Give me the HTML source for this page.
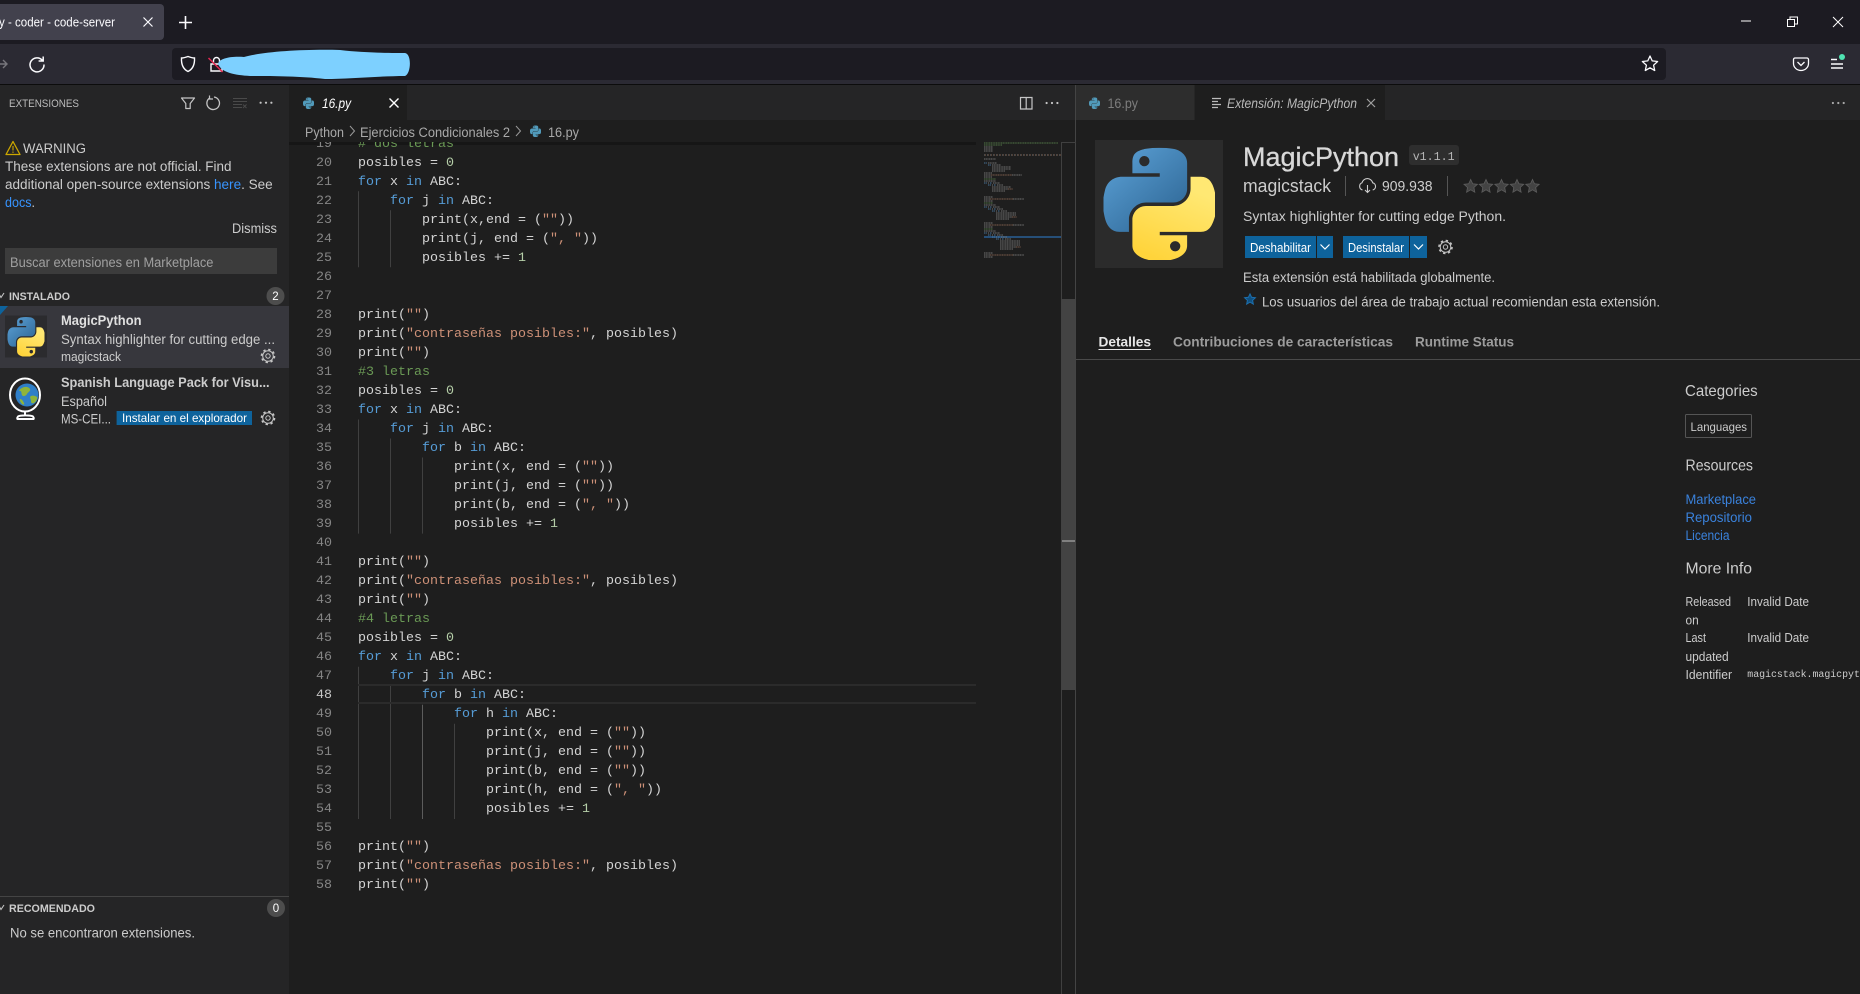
<!DOCTYPE html>
<html lang="es">
<head>
<meta charset="utf-8">
<title>coder - code-server</title>
<style>
html,body{margin:0;padding:0;width:1860px;height:994px;overflow:hidden;background:#1e1e1e}
svg.ui{position:absolute;left:0;top:0}
svg text{font-family:"Liberation Sans",sans-serif;font-size:13.4px;fill:#cccccc}
svg text.m{font-family:"Liberation Mono",monospace}
svg text.b{font-weight:700}
svg text.i{font-style:italic}
.code{position:absolute;left:289px;top:142px;width:687px;height:852px;overflow:hidden}
.code pre{position:absolute;margin:0;top:-7.3px;font:13.33px/19.02px "Liberation Mono",monospace;color:#d4d4d4}
pre.nums{left:0;width:43px;text-align:right;color:#858585}
pre.nums b{font-weight:400;color:#c6c6c6}
pre.src{left:69px}
.k{color:#569cd6}.s{color:#ce9178}.n{color:#b5cea8}.c{color:#6a9955}
</style>
</head>
<body>
<svg class="ui" width="1860" height="994" viewBox="0 0 1860 994">
<defs>
<linearGradient id="gb" x1="0.1" y1="0.05" x2="0.85" y2="0.9"><stop offset="0" stop-color="#5a9fd4"/><stop offset="1" stop-color="#306998"/></linearGradient>
<linearGradient id="gy" x1="0.7" y1="0.15" x2="0.35" y2="1"><stop offset="0" stop-color="#ffe873"/><stop offset="1" stop-color="#ffd43b"/></linearGradient>
<path id="pyb" fill-rule="evenodd" d="M54.9 0C50.3 0 45.9.4 42 1.1 30.6 3.1 28.5 7.4 28.5 15.2V25.5H55.5V29H18.3C10.4 29 3.5 33.7 1.4 42.7-1.1 53-1.2 59.4 1.4 70.2 3.3 78.2 7.9 83.9 15.8 83.9H25.1V71.5C25.1 62.6 32.8 54.7 42 54.7H69C76.5 54.7 82.5 48.5 82.5 41V15.2C82.5 7.9 76.3 2.4 69 1.2 64.4.4 59.6 0 54.9 0ZM40.3 8.3a5.1 5.1 0 1 1 0 10.2 5.1 5.1 0 0 1 0-10.2Z"/>
<path id="pyy" fill-rule="evenodd" d="M85.9 29V41C85.9 50.3 78 58.1 69 58.1H42C34.6 58.1 28.5 64.4 28.5 71.9V97.6C28.5 104.9 34.9 109.2 42 111.3 50.5 113.8 58.7 114.2 69 111.3 75.7 109.3 82.5 105.5 82.5 97.6V87.3H55.5V83.9H96C103.9 83.9 106.8 78.4 109.5 70.2 112.3 61.8 112.2 53.7 109.5 42.7 107.6 34.9 103.9 29 96 29ZM70.7 93.2a5.1 5.1 0 1 1 0 10.2 5.1 5.1 0 0 1 0-10.2Z"/>
<symbol id="pyc" viewBox="0 0 110 112" preserveAspectRatio="none"><use href="#pyb" fill="url(#gb)"/><use href="#pyy" fill="url(#gy)"/></symbol>
<symbol id="pym" viewBox="0 0 110 112" preserveAspectRatio="none"><use href="#pyb" fill="#519aba"/><use href="#pyy" fill="#519aba"/></symbol>
<g id="gear" fill="none" stroke="#c5c5c5"><circle r="5.3" stroke-width="1"/><circle r="2.2" stroke-width="1"/><circle r="6.5" stroke-width="1.6" stroke-dasharray="2.4 2.7"/></g>
<polygon id="star" points="0,-7 2,-2.7 6.7,-2.2 3.2,1 4.1,5.7 0,3.3 -4.1,5.7 -3.2,1 -6.7,-2.2 -2,-2.7"/>
<polygon id="stars" points="0,-5.6 1.6,-2.2 5.4,-1.8 2.6,.8 3.3,4.6 0,2.6 -3.3,4.6 -2.6,.8 -5.4,-1.8 -1.6,-2.2"/>
<g id="dots"><circle cx="-5.4" r="1.1"/><circle r="1.1"/><circle cx="5.4" r="1.1"/></g>
</defs>

<!-- browser chrome -->
<rect width="1860" height="44" fill="#1c1b22"/>
<rect x="-6" y="4" width="170" height="36" rx="4" fill="#42414d"/>
<text x="-1" y="26.5" textLength="116" lengthAdjust="spacingAndGlyphs" style="font-size:13px;fill:#fbfbfe">y - coder - code-server</text>
<path d="M143.5 17.5l9 9M152.5 17.5l-9 9" stroke="#fbfbfe" stroke-width="1.2"/>
<path d="M185.5 16v13M179 22.5h13" stroke="#fbfbfe" stroke-width="1.6"/>
<path d="M1741 21h10" stroke="#fff" stroke-width="1"/>
<path d="M1787.5 19.5h7v7h-7zM1790 19.5v-2.5h7.5v7h-3" fill="none" stroke="#fff" stroke-width="1"/>
<path d="M1833 17l10 10M1843 17l-10 10" stroke="#fff" stroke-width="1"/>

<rect y="44" width="1860" height="40" fill="#2b2a33"/>
<rect y="84" width="1860" height="1" fill="#0c0c0c"/>
<rect x="172" y="48" width="1494" height="32" rx="4" fill="#1c1b22"/>
<path d="M-2 64H7M3 60l4 4-4 4" fill="none" stroke="#77767c" stroke-width="1.4"/>
<path d="M42.5 60.5A7 7 0 1 0 44 64.5M43.2 56.5V61h-4.6" fill="none" stroke="#fbfbfe" stroke-width="1.5"/>
<path d="M188 56.5C191 57.6 193 58 194.5 58 194.8 64 193 69 188 71.5 183 69 181.2 64 181.5 58 183 58 185 57.6 188 56.5Z" fill="none" stroke="#fbfbfe" stroke-width="1.4"/>
<path d="M211 64h11v7h-11zM213.5 64v-3.5a3 3 0 0 1 6 0V64" fill="none" stroke="#fbfbfe" stroke-width="1.4"/>
<path d="M208.5 58l14 14" stroke="#e22850" stroke-width="1.5"/>
<path d="M218 64C219 58 232 56 244 57 262 52 300 49 340 50 365 53 395 53 405 53 412 54 411 74 405 76 380 76 350 79 325 79 300 76 270 76 250 76 235 75 222 73 218 64Z" fill="#7dd0ff"/>
<polygon points="1650,56 1652.2,60.9 1657.6,61.5 1653.6,65.2 1654.7,70.5 1650,67.8 1645.3,70.5 1646.4,65.2 1642.4,61.5 1647.8,60.9" fill="none" stroke="#fbfbfe" stroke-width="1.3" stroke-linejoin="round"/>
<path d="M1795 58h12a1.5 1.5 0 0 1 1.5 1.5v4a7.5 7 0 0 1-15 0v-4A1.5 1.5 0 0 1 1795 58Z" fill="none" stroke="#fbfbfe" stroke-width="1.3"/>
<path d="M1797.5 62l3.5 3.5 3.5-3.5" fill="none" stroke="#fbfbfe" stroke-width="1.3"/>
<path d="M1831 59.5h6M1831 64h12M1831 68h12" stroke="#fbfbfe" stroke-width="1.4"/>
<circle cx="1842" cy="57" r="3" fill="#4fe3b2"/>

<!-- workbench backgrounds -->
<rect y="85" width="289" height="909" fill="#252526"/>
<rect x="289" y="85" width="1571" height="35" fill="#252526"/>
<rect x="289" y="120" width="1571" height="874" fill="#1e1e1e"/>
<rect x="289" y="85" width="118" height="35" fill="#1e1e1e"/>
<rect x="1075" y="85" width="1" height="909" fill="#444444"/>
<rect x="1076" y="85" width="118.5" height="35" fill="#2d2d2d"/>
<rect x="1194.5" y="85" width="190.5" height="35" fill="#1e1e1e"/>

<!-- sidebar -->
<text x="9" y="107" textLength="70" lengthAdjust="spacingAndGlyphs" style="font-size:11px;fill:#bbbbbb">EXTENSIONES</text>
<path d="M181.5 98H194.5L190.2 103.5V108.5H185.8V103.5Z" fill="none" stroke="#c5c5c5" stroke-width="1.2" stroke-linejoin="round"/>
<path d="M210 97.8A6.3 6.3 0 1 0 214 97" fill="none" stroke="#c5c5c5" stroke-width="1.3"/><path d="M209.5 95.5v3.5h3.5" fill="none" stroke="#c5c5c5" stroke-width="1.2"/>
<path d="M233 98.5h14M233 101.5h14M233 104.5h9M233 107.5h9M243 104.5l3.5 3.5M246.5 104.5l-3.5 3.5" stroke="#4a4a4a" stroke-width="1"/>
<use href="#dots" x="266" y="102.7" fill="#c5c5c5"/>

<path d="M13 141.5L20 154.5H6Z" fill="none" stroke="#cca700" stroke-width="1.3" stroke-linejoin="round"/>
<path d="M13 146v4.5M13 151.5v1.4" stroke="#cca700" stroke-width="1.1"/>
<text x="23" y="153" textLength="63" lengthAdjust="spacingAndGlyphs">WARNING</text>
<text x="5" y="171" textLength="226.5" lengthAdjust="spacingAndGlyphs">These extensions are not official. Find</text>
<text x="5" y="189" textLength="267.7" lengthAdjust="spacingAndGlyphs">additional open-source extensions <tspan style="fill:#3794ff">here</tspan>. See</text>
<text x="5" y="207" textLength="30" lengthAdjust="spacingAndGlyphs"><tspan style="fill:#3794ff">docs</tspan>.</text>
<text x="232" y="233" textLength="45" lengthAdjust="spacingAndGlyphs">Dismiss</text>
<rect x="5" y="248" width="272" height="26" fill="#3c3c3c"/>
<text x="10" y="266.8" textLength="203.4" lengthAdjust="spacingAndGlyphs" style="fill:#a0a0a0">Buscar extensiones en Marketplace</text>

<path d="M-1 294L1 297.5 4 293" fill="none" stroke="#c5c5c5" stroke-width="1.1"/>
<text class="b" x="9" y="300" textLength="61" lengthAdjust="spacingAndGlyphs" style="font-size:11px">INSTALADO</text>
<circle cx="275.5" cy="296" r="9" fill="#4d4d4d"/>
<text x="275.5" y="300" text-anchor="middle" style="font-size:11.5px;fill:#ffffff">2</text>

<rect y="306" width="289" height="62" fill="#37373d"/>
<path d="M0 306H8L0 315Z" fill="#0e639c"/>
<rect x="5" y="315.5" width="42" height="42" fill="#2b2b2e"/>
<use href="#pyc" x="7.5" y="317" width="37" height="39.5"/>
<text class="b" x="61" y="325" textLength="80.5" lengthAdjust="spacingAndGlyphs" style="fill:#e0e0e0">MagicPython</text>
<text x="61" y="344" textLength="214" lengthAdjust="spacingAndGlyphs">Syntax highlighter for cutting edge ...</text>
<text x="61" y="361" textLength="60" lengthAdjust="spacingAndGlyphs" style="font-size:12.5px">magicstack</text>
<use href="#gear" x="268" y="356"/>

<ellipse cx="25" cy="395" rx="15" ry="16.5" fill="none" stroke="#ffffff" stroke-width="2"/>
<circle cx="27" cy="395" r="11.5" fill="#2f7fc8"/>
<path d="M22 388c3-2 7-1 8 1s-2 3-3 5-4 3-5 1 0-4-2-4 0-2 2-3ZM31 396c2-1 5 0 6 1s-1 5-3 6-3 0-3-2-2-4 0-5ZM20 399c2 0 3 2 4 4s-1 2-2 1-3-4-2-5Z" fill="#8fb43a"/>
<path d="M25 411.5v4M18 416.5c2-1.5 13-1.5 15 0 1 1.5 1 2.5 0 2.5H18c-1 0-1-1 0-2.5Z" fill="none" stroke="#ffffff" stroke-width="2"/>
<text class="b" x="61" y="387" textLength="208.6" lengthAdjust="spacingAndGlyphs">Spanish Language Pack for Visu...</text>
<text x="61" y="406" textLength="46" lengthAdjust="spacingAndGlyphs">Español</text>
<text x="61" y="423.5" textLength="50" lengthAdjust="spacingAndGlyphs">MS-CEI...</text>
<rect x="116.6" y="411" width="135.4" height="14" fill="#0e639c"/>
<text x="122" y="422" textLength="125" lengthAdjust="spacingAndGlyphs" style="font-size:12px;fill:#ffffff">Instalar en el explorador</text>
<use href="#gear" x="268" y="418"/>

<rect y="896" width="289" height="1" fill="#444444"/>
<path d="M-1 906L1 909.5 4 905" fill="none" stroke="#c5c5c5" stroke-width="1.1"/>
<text class="b" x="9" y="912" textLength="86" lengthAdjust="spacingAndGlyphs" style="font-size:11px">RECOMENDADO</text>
<circle cx="276" cy="908" r="9" fill="#4d4d4d"/>
<text x="276" y="912" text-anchor="middle" style="font-size:11.5px;fill:#ffffff">0</text>
<text x="10" y="937.5" textLength="185" lengthAdjust="spacingAndGlyphs">No se encontraron extensiones.</text>

<!-- editor tabs -->
<use href="#pym" x="303" y="97.5" width="11" height="11.5"/>
<text class="i" x="322" y="108" textLength="29" lengthAdjust="spacingAndGlyphs" style="fill:#ffffff">16.py</text>
<path d="M389.5 98.5l9 9M398.5 98.5l-9 9" stroke="#ffffff" stroke-width="1.4"/>
<path d="M1020.5 97.5h11.5v11.5h-11.5zM1026.2 97.5v11.5" fill="none" stroke="#c5c5c5" stroke-width="1.2"/>
<use href="#dots" x="1052" y="103" fill="#c5c5c5"/>

<!-- breadcrumbs -->
<text x="305" y="137" textLength="39" lengthAdjust="spacingAndGlyphs" style="fill:#a9a9a9">Python</text>
<path d="M350 126l4.5 5-4.5 5" fill="none" stroke="#9a9a9a"/>
<text x="360" y="137" textLength="150" lengthAdjust="spacingAndGlyphs" style="fill:#a9a9a9">Ejercicios Condicionales 2</text>
<path d="M516 126l4.5 5-4.5 5" fill="none" stroke="#9a9a9a"/>
<use href="#pym" x="530" y="125.5" width="11" height="11.5"/>
<text x="548" y="137" textLength="31" lengthAdjust="spacingAndGlyphs" style="fill:#a9a9a9">16.py</text>
<rect x="289" y="142" width="687" height="3" fill="#111111" opacity=".55"/>

<!-- indent guides and current line -->
<path d="M358.5 191.2V267.3M390.5 210.3V267.3M358.5 419.5V533.6M390.5 438.5V533.6M422.5 457.5V533.6M358.5 666.7V819M390.5 685.7V819M454.5 723.8V819" stroke="#404040" stroke-width="1"/>
<path d="M422.5 704.8V819" stroke="#5c5c5c" stroke-width="1"/>
<path d="M358 685h618M358 703h618" stroke="#2b2b2b" stroke-width="2"/>

<!-- minimap -->
<rect x="984" y="236" width="77" height="2" fill="#264f78"/>
<g fill="none" stroke-width="1" stroke-dasharray="1.2 .5" opacity=".9">
<path stroke="#58804c" d="M984 143h74M984 145h18M984 179h12M984 203h9M984 229h9"/>
<path stroke="#4a7ba6" d="M984 163h3M988 165h3M984 183h3M990 183h2M988 185h3M994 185h2M984 207h3M990 207h2M988 209h3M994 209h2M992 211h3M998 211h2M984 233h3M990 233h2M988 235h3M994 235h2M992 237h3M998 237h2M996 239h3M1002 239h2"/>
<path stroke="#8a6552" d="M991 175h21M990 199h23M990 225h23M990 255h23M1008 189h5M1012 217h5M1016 247h5"/>
<path stroke="#7c7c7c" d="M984 147h9M984 149h9M984 151h9M984 159h12M988 163h9M992 165h9M992 167h19M992 169h19M992 171h13M984 173h8M984 175h7M1012 175h10M984 177h8M984 181h12M988 183h1M993 183h7M992 185h1M997 185h6M992 187h19M992 189h16M992 191h13M984 197h9M984 199h6M1013 199h11M984 201h9M984 205h12M988 207h1M993 207h7M992 209h1M997 209h6M996 211h1M1001 211h6M996 213h20M996 215h20M996 217h16M996 219h13M984 223h9M984 225h6M1013 225h11M984 227h9M984 231h12M988 233h1M993 233h7M992 235h1M997 235h6M996 237h1M1001 237h6M1000 239h1M1005 239h6M1000 241h20M1000 243h20M1000 245h20M1000 247h16M1000 249h13M984 253h9M984 255h6M1013 255h11M984 257h9"/>
<path stroke="#7c7c7c" stroke-dasharray="2 1" d="M984 155h77"/>
<path stroke="#8a6552" stroke-dasharray="1 2" d="M985 155h76"/>
</g>
<!-- scrollbar -->
<rect x="1061" y="142" width="1" height="852" fill="#404040"/>
<rect x="1061" y="142" width="15" height="1" fill="#404040"/>
<rect x="1061.5" y="299" width="14" height="391" fill="#434343"/>
<rect x="1062" y="540" width="13" height="2" fill="#808080"/>

<!-- extension editor tabs -->
<use href="#pym" x="1089" y="97.5" width="11" height="11.5"/>
<text x="1107.5" y="108" textLength="30.5" lengthAdjust="spacingAndGlyphs" style="fill:#7d7d7d">16.py</text>
<path d="M1212 98.5h9M1212 101.5h6M1212 104.5h9M1212 107.5h6" stroke="#bbbbbb" stroke-width="1.2"/>
<text class="i" x="1227" y="108" textLength="130" lengthAdjust="spacingAndGlyphs" style="fill:#b8b8b8">Extensión: MagicPython</text>
<path d="M1367 99l8 8M1375 99l-8 8" stroke="#a0a0a0" stroke-width="1.2"/>
<use href="#dots" x="1838.3" y="103" fill="#a8a8a8"/>

<!-- extension header -->
<rect x="1095" y="140" width="128" height="128" fill="#2b2b2b"/>
<use href="#pyc" x="1103.5" y="147.7" width="111.5" height="112.3"/>
<text x="1243" y="166" textLength="156" lengthAdjust="spacingAndGlyphs" style="font-size:27px;fill:#d8d8d8;stroke:#d8d8d8;stroke-width:.3px">MagicPython</text>
<rect x="1409" y="145" width="50" height="20" rx="3" fill="#2e2e2e"/>
<text class="m" x="1412.7" y="160" textLength="42" lengthAdjust="spacingAndGlyphs" style="font-size:12px;fill:#b5b5b5">v1.1.1</text>
<text x="1243" y="192" textLength="88" lengthAdjust="spacingAndGlyphs" style="font-size:18.5px">magicstack</text>
<rect x="1345" y="176" width="1" height="20" fill="#555555"/>
<path d="M1362.5 190a3.8 3.8 0 0 1-.5-7.2 5.5 5.5 0 0 1 10.7 0 3.7 3.7 0 0 1 0 7.2M1367.5 185v7.5M1365 190l2.5 2.5 2.5-2.5" fill="none" stroke="#cccccc" stroke-width="1.1"/>
<text x="1382" y="191" textLength="50.5" lengthAdjust="spacingAndGlyphs" style="font-size:14.4px">909.938</text>
<rect x="1447" y="176" width="1" height="20" fill="#555555"/>
<g fill="#434343" stroke="#5e5e5e" stroke-width=".8"><use href="#star" x="1470.7" y="186.5"/><use href="#star" x="1486" y="186.5"/><use href="#star" x="1501.5" y="186.5"/><use href="#star" x="1517" y="186.5"/><use href="#star" x="1532.5" y="186.5"/></g>
<text x="1243" y="221" textLength="263" lengthAdjust="spacingAndGlyphs">Syntax highlighter for cutting edge Python.</text>
<rect x="1245" y="236" width="71" height="22" fill="#0e639c"/>
<rect x="1317" y="236" width="16" height="22" fill="#0e639c"/>
<rect x="1343" y="236" width="66" height="22" fill="#0e639c"/>
<rect x="1410" y="236" width="17" height="22" fill="#0e639c"/>
<text x="1250" y="252" textLength="61" lengthAdjust="spacingAndGlyphs" style="font-size:12.5px;fill:#ffffff">Deshabilitar</text>
<text x="1348" y="252" textLength="56" lengthAdjust="spacingAndGlyphs" style="font-size:12.5px;fill:#ffffff">Desinstalar</text>
<path d="M1320.5 244.5l4.5 4.5 4.5-4.5M1414 244.5l4.5 4.5 4.5-4.5" fill="none" stroke="#ffffff" stroke-width="1.2"/>
<use href="#gear" x="1445.5" y="247"/>
<text x="1243" y="282" textLength="252" lengthAdjust="spacingAndGlyphs">Esta extensión está habilitada globalmente.</text>
<use href="#stars" x="1250" y="299.5" fill="#0f4f7f" stroke="#1c6fae" stroke-width="1"/>
<text x="1262" y="306.5" textLength="398" lengthAdjust="spacingAndGlyphs">Los usuarios del área de trabajo actual recomiendan esta extensión.</text>
<text class="b" x="1098.5" y="346.5" textLength="52.5" lengthAdjust="spacingAndGlyphs" style="fill:#e7e7e7">Detalles</text>
<rect x="1098.5" y="349" width="52.5" height="1" fill="#e7e7e7"/>
<text class="b" x="1173" y="346.5" textLength="220" lengthAdjust="spacingAndGlyphs" style="fill:#9c9c9c">Contribuciones de características</text>
<text class="b" x="1415" y="346.5" textLength="99" lengthAdjust="spacingAndGlyphs" style="fill:#9c9c9c">Runtime Status</text>
<rect x="1076" y="359" width="784" height="1" fill="#4a4a4a"/>

<!-- details side -->
<text x="1685" y="396" textLength="72.7" lengthAdjust="spacingAndGlyphs" style="font-size:16px">Categories</text>
<rect x="1685.5" y="414.5" width="66" height="23" rx="1" fill="none" stroke="#555555"/>
<text x="1690.5" y="431" textLength="56.5" lengthAdjust="spacingAndGlyphs" style="font-size:12px">Languages</text>
<text x="1685.5" y="470.5" textLength="67.5" lengthAdjust="spacingAndGlyphs" style="font-size:16px">Resources</text>
<text x="1685.5" y="504" textLength="70.5" lengthAdjust="spacingAndGlyphs" style="fill:#3a82dc">Marketplace</text>
<text x="1685.5" y="522" textLength="66.5" lengthAdjust="spacingAndGlyphs" style="fill:#3a82dc">Repositorio</text>
<text x="1685.5" y="540" textLength="44" lengthAdjust="spacingAndGlyphs" style="fill:#3a82dc">Licencia</text>
<text x="1685.5" y="573.5" textLength="66.5" lengthAdjust="spacingAndGlyphs" style="font-size:16px">More Info</text>
<text x="1685.5" y="606" textLength="45.5" lengthAdjust="spacingAndGlyphs" style="font-size:12.5px">Released</text>
<text x="1685.5" y="624.5" textLength="13.2" lengthAdjust="spacingAndGlyphs" style="font-size:12.5px">on</text>
<text x="1685.5" y="642" textLength="20.5" lengthAdjust="spacingAndGlyphs" style="font-size:12.5px">Last</text>
<text x="1685.5" y="661" textLength="43.2" lengthAdjust="spacingAndGlyphs" style="font-size:12.5px">updated</text>
<text x="1685.5" y="679" textLength="46.5" lengthAdjust="spacingAndGlyphs" style="font-size:12.5px">Identifier</text>
<text x="1747.3" y="606" textLength="61.7" lengthAdjust="spacingAndGlyphs" style="font-size:12.5px">Invalid Date</text>
<text x="1747.3" y="642" textLength="61.7" lengthAdjust="spacingAndGlyphs" style="font-size:12.5px">Invalid Date</text>
<text class="m" x="1747.3" y="677" style="font-size:9.9px">magicstack.magicpython</text>
</svg>

<div class="code">
<pre class="nums">19
20
21
22
23
24
25
26
27
28
29
30
31
32
33
34
35
36
37
38
39
40
41
42
43
44
45
46
47
<b>48</b>
49
50
51
52
53
54
55
56
57
58</pre>
<pre class="src"><span class="c"># dos letras</span>
posibles = <span class="n">0</span>
<span class="k">for</span> x <span class="k">in</span> ABC:
    <span class="k">for</span> j <span class="k">in</span> ABC:
        print(x,end = (<span class="s">""</span>))
        print(j, end = (<span class="s">", "</span>))
        posibles += <span class="n">1</span>


print(<span class="s">""</span>)
print(<span class="s">"contraseñas posibles:"</span>, posibles)
print(<span class="s">""</span>)
<span class="c">#3 letras</span>
posibles = <span class="n">0</span>
<span class="k">for</span> x <span class="k">in</span> ABC:
    <span class="k">for</span> j <span class="k">in</span> ABC:
        <span class="k">for</span> b <span class="k">in</span> ABC:
            print(x, end = (<span class="s">""</span>))
            print(j, end = (<span class="s">""</span>))
            print(b, end = (<span class="s">", "</span>))
            posibles += <span class="n">1</span>

print(<span class="s">""</span>)
print(<span class="s">"contraseñas posibles:"</span>, posibles)
print(<span class="s">""</span>)
<span class="c">#4 letras</span>
posibles = <span class="n">0</span>
<span class="k">for</span> x <span class="k">in</span> ABC:
    <span class="k">for</span> j <span class="k">in</span> ABC:
        <span class="k">for</span> b <span class="k">in</span> ABC:
            <span class="k">for</span> h <span class="k">in</span> ABC:
                print(x, end = (<span class="s">""</span>))
                print(j, end = (<span class="s">""</span>))
                print(b, end = (<span class="s">""</span>))
                print(h, end = (<span class="s">", "</span>))
                posibles += <span class="n">1</span>

print(<span class="s">""</span>)
print(<span class="s">"contraseñas posibles:"</span>, posibles)
print(<span class="s">""</span>)</pre>
</div>
</body>
</html>
